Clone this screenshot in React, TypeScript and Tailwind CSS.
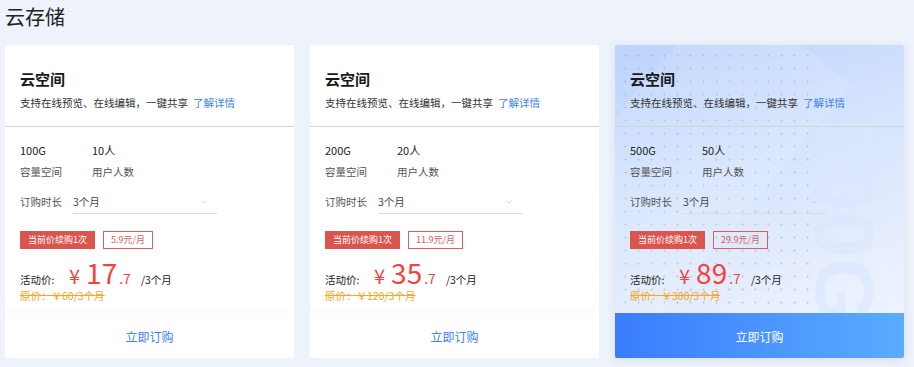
import { ChevronDown } from "lucide-react";

type Plan = {
  size: string;
  users: string;
  unit: string;
  whole: string;
  cents: string;
  original: string;
  active?: boolean;
};

const plans: Plan[] = [
  { size: "100G", users: "10人", unit: "5.9元/月", whole: "17", cents: ".7", original: "原价：￥60/3个月" },
  { size: "200G", users: "20人", unit: "11.9元/月", whole: "35", cents: ".7", original: "原价：￥120/3个月" },
  { size: "500G", users: "50人", unit: "29.9元/月", whole: "89", cents: ".7", original: "原价：￥300/3个月", active: true },
];

function PlanCard({ plan }: { plan: Plan }) {
  return (
    <div
      className={`relative w-[289px] h-[313px] flex flex-col overflow-hidden rounded-[2px] ${
        plan.active
          ? "bg-[linear-gradient(160deg,#bcd3fc_0%,#d6e4fd_40%,#e8effe_75%,#f1f5ff_100%)] shadow-[0_2px_10px_rgba(60,90,150,0.12)]"
          : "bg-white"
      }`}
    >
      {plan.active && (
        <>
          {/* dotted texture + faint capacity watermark */}
          <div className="absolute left-0 top-0 w-[200px] h-[268px] bg-[radial-gradient(circle,rgba(120,145,190,0.28)_1px,transparent_1.2px)] bg-[length:13px_13px] bg-[position:4px_4px]" />
          <div className="absolute left-[-40px] top-[-60px] w-[160px] h-[420px] rotate-[40deg] bg-white/10" />
          <div className="absolute left-[182px] top-[70px] w-[95px] h-[210px] flex items-center justify-center select-none">
            <span className="rotate-90 whitespace-nowrap text-[84px] leading-none font-black text-[#dbe6fd]/60 font-['Liberation_Sans',sans-serif]">
              500G
            </span>
          </div>
        </>
      )}

      <div className="relative px-[15px] pt-[23px] h-[82px] border-b border-[#cfd4dc]">
        <div className="text-[15px] leading-[21px] font-bold text-[#1a1a1a]">云空间</div>
        <div className="mt-[6px] text-[10.5px] leading-[16px] text-[#333]">
          支持在线预览、在线编辑，一键共享
          <span className="ml-[5px] text-[#3d7ff5]">了解详情</span>
        </div>
      </div>

      <div className="relative flex-1 px-[15px] pt-[15px]">
        <div className="flex text-[11px] leading-[16px] text-[#222]">
          <div className="w-[72px]">{plan.size}</div>
          <div>{plan.users}</div>
        </div>
        <div className="mt-[6px] flex text-[10.5px] leading-[16px] text-[#555]">
          <div className="w-[72px]">容量空间</div>
          <div>用户人数</div>
        </div>
        <div className="mt-[10px] flex items-center text-[10.5px] text-[#555]">
          <span className="w-[53px] leading-[24px]">订购时长</span>
          <div className="w-[144px] h-[24px] flex items-center justify-between border-b border-[#dcdcdc] pr-[8px]">
            <span className="text-[#444]">3个月</span>
            <ChevronDown size={10} strokeWidth={1.5} className="text-[#b8bfcc]" />
          </div>
        </div>
        <div className="mt-[17px] flex items-center gap-[8px] text-[9px]">
          <span className="h-[18px] w-[75px] flex items-center justify-center bg-[#dc544e] text-white">
            当前价续购1次
          </span>
          <span className="h-[18px] px-[7px] flex items-center justify-center border border-[#d9605a] text-[#d9605a]">
            {plan.unit}
          </span>
        </div>
        <div className="mt-[7px] flex items-baseline h-[32px]">
          <span className="text-[10.5px] text-[#222] w-[49px]">活动价:</span>
          <span className="text-[20px] text-[#f5433c]">¥</span>
          <span className="ml-[6px] text-[28px] leading-[32px] text-[#f5433c]">{plan.whole}</span>
          <span className="ml-[2px] text-[14px] text-[#f5433c]">{plan.cents}</span>
          <span className="ml-[10px] text-[10.5px] text-[#222]">/3个月</span>
        </div>
        <div className="text-[10.5px] leading-[16px] text-[#f5a623] line-through">{plan.original}</div>
      </div>

      <div
        className={`relative h-[45px] flex items-center justify-center text-[12px] pt-[2px] ${
          plan.active
            ? "bg-[linear-gradient(90deg,#3a7cfd,#5aacff)] text-white"
            : "bg-white text-[#3d7ff5] shadow-[0_-6px_10px_rgba(0,0,0,0.025)]"
        }`}
      >
        立即订购
      </div>
    </div>
  );
}

export default function App() {
  return (
    <div className="w-[914px] h-[367px] bg-[#eef2fa] font-['Noto_Sans_CJK_SC','Noto_Sans',sans-serif] overflow-hidden">
      <div className="pl-[5px] pt-[2px] h-[45px] text-[20px] leading-[30px] text-[#222]">云存储</div>
      <div className="flex gap-[16px] pl-[5px]">
        {plans.map((p) => (
          <PlanCard key={p.size} plan={p} />
        ))}
      </div>
    </div>
  );
}
